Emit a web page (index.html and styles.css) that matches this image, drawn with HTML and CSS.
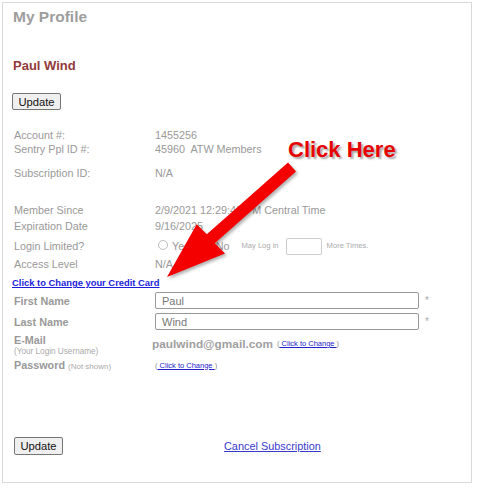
FILE: index.html
```
<!DOCTYPE html>
<html>
<head>
<meta charset="utf-8">
<title>My Profile</title>
<link rel="stylesheet" href="styles.css">
</head>
<body>
<div class="frame">
  <div class="title">My Profile</div>
  <div class="name">Paul Wind</div>
  <div class="btn-row"><button class="btn">Update</button></div>

  <div class="row r-account"><span class="lbl">Account #:</span><span class="val">1455256</span></div>
  <div class="row r-sentry"><span class="lbl">Sentry Ppl ID #:</span><span class="val">45960&nbsp; ATW Members</span></div>
  <div class="row r-sub"><span class="lbl">Subscription ID:</span><span class="val">N/A</span></div>
  <div class="row r-member"><span class="lbl">Member Since</span><span class="val">2/9/2021 12:29:40 PM Central Time</span></div>
  <div class="row r-exp"><span class="lbl">Expiration Date</span><span class="val">9/16/2025</span></div>
  <div class="row r-login">
    <span class="lbl">Login Limited?</span>
    <span class="val login-val">
      <input type="radio" class="radio" name="lim"><span class="opt">Yes</span>
      <input type="radio" class="radio radio-no" name="lim"><span class="opt opt-no">No</span>
      <span class="tiny may">May Log in</span>
      <input type="text" class="times">
      <span class="tiny">More Times.</span>
    </span>
  </div>
  <div class="row r-access"><span class="lbl">Access Level</span><span class="val">N/A</span></div>
  <div class="row r-link"><a href="#" class="cc-link">Click to Change your Credit Card</a></div>
  <div class="row r-first"><span class="lbl bold">First Name</span><input type="text" class="field" value="Paul"><span class="req">*</span></div>
  <div class="row r-last"><span class="lbl bold">Last Name</span><input type="text" class="field" value="Wind"><span class="req">*</span></div>
  <div class="row r-email">
    <span class="lbl email-lbl"><span class="bold em-line">E-Mail</span><span class="hint">(Your Login Username)</span></span>
    <span class="email-val"><span class="email">paulwind@gmail.com</span><span class="sm">(<a href="#">&nbsp;Click to Change&nbsp;</a>)</span></span>
  </div>
  <div class="row r-pass"><span class="lbl"><span class="bold">Password</span> <span class="note">(Not shown)</span></span><span class="sm">(<a href="#">&nbsp;Click to Change&nbsp;</a>)</span></div>
  <div class="row r-bottom"><button class="btn btn-bottom">Update</button><a href="#" class="cancel">Cancel Subscription</a></div>
</div>

<div class="callout">Click Here</div>
<svg class="arrow" width="477" height="488" viewBox="0 0 477 488">
  <polygon points="288,162.5 296,171.5 214.8,243.3 225,253.5 167,277 196.7,224.3 206.8,234.3" fill="#f40000"/>
</svg>
</body>
</html>
```
FILE: styles.css
```
* { box-sizing: border-box; }
body {
  margin: 0;
  position: relative;
  width: 477px;
  height: 488px;
  background: #fff;
  font-family: "Liberation Sans", Arial, sans-serif;
  color: #999;
  overflow: hidden;
}
.frame {
  margin: 2px 0 0 2px;
  width: 470px;
  height: 481px;
  border: 1px solid #d9d9d9;
  padding-left: 11px;
}
.title {
  height: 30px;
  line-height: 28px;
  font-size: 15.5px;
  font-weight: bold;
  color: #9d9d9d;
  margin-left: -1px;
}
.name {
  margin-top: 22.5px;
  height: 20px;
  line-height: 20px;
  font-size: 13px;
  font-weight: bold;
  color: #923a3a;
  margin-left: -1px;
}
.btn-row { margin-top: 17.5px; height: 17px; margin-left: -2px; }
.btn {
  display: block;
  width: 49px;
  height: 17px;
  padding: 0;
  font-family: "Liberation Sans", Arial, sans-serif;
  font-size: 11.2px;
  color: #111;
  background: #efefef;
  border: 1px solid #767676;
  border-radius: 2px;
}
.row {
  display: flex;
  align-items: center;
  height: 14px;
  font-size: 10.8px;
  line-height: 14px;
}
.lbl { width: 141px; flex: none; white-space: nowrap; }
.val { white-space: nowrap; }
.bold { font-weight: bold; }

.r-account { margin-top: 18px; }
.r-sub { margin-top: 9.5px; }
.r-member { margin-top: 23.5px; }
.r-exp { margin-top: 1.5px; }
.r-login { margin-top: 3.5px; height: 20px; }
.login-val { display: flex; align-items: center; }
.radio {
  appearance: none;
  -webkit-appearance: none;
  width: 10px;
  height: 10px;
  margin: 0 4px 0 3px;
  border: 1px solid #bbb;
  border-radius: 50%;
  background: #fff;
  position: relative;
  top: -1px;
}
.radio-no { margin-left: 13px; margin-right: 3px; }
.opt { line-height: 14px; }
.tiny { font-size: 7.6px; color: #aaa; }
.may { margin-left: 12px; }
.times {
  width: 36px;
  height: 17px;
  margin: 0 5px 0 7px;
  border: 1px solid #ccc;
  border-radius: 2px;
  background: #fff;
}
.r-access { margin-top: 1px; }
.r-link { margin-top: 5px; margin-left: -2px; }
.cc-link {
  font-size: 9.4px;
  font-weight: bold;
  color: #1c1cdb;
  text-decoration: underline;
}
.r-first { margin-top: 1.5px; height: 18px; }
.r-last { margin-top: 3px; height: 18px; }
.field {
  width: 264px;
  height: 17px;
  border: 1px solid #999;
  border-radius: 2px;
  padding: 0 0 0 6px;
  font-family: "Liberation Sans", Arial, sans-serif;
  font-size: 11px;
  color: #777;
  background: #fff;
}
.req { margin-left: 6px; font-size: 10px; color: #aaa; }
.r-email { margin-top: 3.5px; height: 22.5px; align-items: flex-start; }
.email-lbl { display: flex; flex-direction: column; }
.em-line { height: 12.5px; line-height: 13px; }
.hint { height: 10px; line-height: 10px; font-size: 8.2px; color: #aaa; }
.email-val { display: flex; align-items: center; margin-left: -3px; padding-top: 3px; height: 17px; }
.email { font-size: 11.8px; font-weight: bold; color: #a0a0a0; }
.sm { font-size: 7.5px; color: #888; margin-left: 4px; }
.sm a { color: #2222cc; text-decoration: underline; }
.r-pass { margin-top: 2px; }
.r-pass .sm { margin-left: 0; }
.note { font-size: 8px; color: #aaa; }
.r-bottom { margin-top: 64.5px; height: 18px; }
.btn-bottom { height: 18px; }
.cancel {
  margin-left: 161px;
  font-size: 10.9px;
  color: #3a3acc;
  text-decoration: underline;
}
.callout {
  position: absolute;
  left: 288px;
  top: 138.5px;
  height: 22px;
  line-height: 22px;
  font-size: 22px;
  font-weight: bold;
  color: #e60000;
  text-shadow: 2px 2px 2px rgba(0, 0, 0, 0.35);
  white-space: nowrap;
}
.arrow {
  position: absolute;
  left: 0;
  top: 0;
  pointer-events: none;
  filter: drop-shadow(2px 2px 1.5px rgba(0, 0, 0, 0.3));
}
```
